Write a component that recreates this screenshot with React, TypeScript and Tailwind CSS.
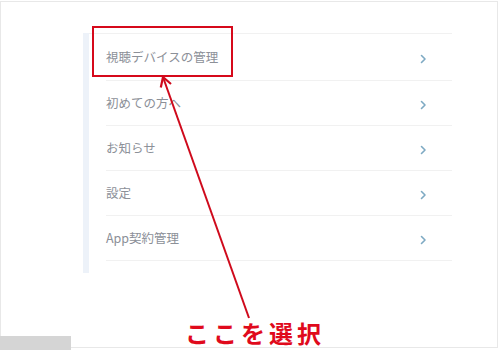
import React from 'react';

const items = ['視聴デバイスの管理', '初めての方へ', 'お知らせ', '設定', 'App契約管理'];

const Chevron = () => (
  <svg width="7" height="10" viewBox="0 0 7 10" fill="none">
    <path d="M1.5 1.5 L5 5 L1.5 8.5" stroke="#7eaac3" strokeWidth="1.6" strokeLinecap="round" strokeLinejoin="round" />
  </svg>
);

const App = () => {
  return (
    <div
      className="relative w-[500px] h-[350px] overflow-hidden bg-white"
      style={{ fontFamily: '"Noto Sans CJK JP", "Noto Sans", sans-serif' }}
    >
      {/* outer frame */}
      <div className="pointer-events-none absolute left-[0px] top-[1px] right-[2px] bottom-[2px] border border-[#e8e8e8]" />

      {/* menu list */}
      <div className="ml-[83px] pt-[33px] flex">
        <div className="w-[6px] h-[240px] bg-[#edf2f9]" />
        <div className="w-[363px] border-t border-[#f1f1f1]">
          {items.map((label, i) => (
            <div key={label} className={i === 0 ? 'h-[47px] pl-[17px] flex' : 'h-[45px] pl-[17px] flex'}>
              <div className="flex-1 flex items-center justify-between pr-[25px] border-b border-[#f1f1f1]">
                <span className="text-[12.5px] text-[#8c9098] leading-none">{label}</span>
                <span className="mt-[3px]">
                  <Chevron />
                </span>
              </div>
            </div>
          ))}
        </div>
      </div>

      {/* highlight box */}
      <div className="absolute left-[92px] top-[26px] w-[141px] h-[51px] border-2 border-[#d6091b]" />

      {/* arrow */}
      <svg className="absolute left-0 top-0" width="500" height="350" viewBox="0 0 500 350" fill="none">
        <line x1="249" y1="318" x2="163.5" y2="78.5" stroke="#cf0a1c" strokeWidth="2" />
        <polyline points="160.8,87.5 163,77 171,84" stroke="#cf0a1c" strokeWidth="2.2" strokeLinejoin="miter" />
      </svg>

      {/* label */}
      <div className="absolute left-[185px] top-[321px] text-[24px] leading-none font-bold tracking-[4px] text-[#e00a1c]">
        ここを選択
      </div>

      {/* scrollbar remnant */}
      <div className="absolute left-0 top-[336px] w-[71px] h-[14px] bg-[#d5d5d5]" />
    </div>
  );
};

export default App;
